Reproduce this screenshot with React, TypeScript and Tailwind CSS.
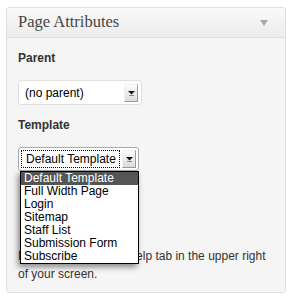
const templates = [
  "Default Template",
  "Full Width Page",
  "Login",
  "Sitemap",
  "Staff List",
  "Submission Form",
  "Subscribe",
];

function SelectArrow() {
  return (
    <div className="flex h-[18px] w-[14px] items-center justify-center border border-t-[#f0f0f0] border-l-[#f0f0f0] border-r-[#9a9a9a] border-b-[#9a9a9a] bg-gradient-to-b from-[#fbfbfb] to-[#dcdcdc]">
      <svg width="7" height="6" viewBox="0 0 7 6">
        <path d="M0 1h7L3.5 4.5z" fill="#111" />
        <path d="M1 5.5h5" stroke="#888" strokeWidth="1" />
      </svg>
    </div>
  );
}

export default function App() {
  return (
    <div className="h-[300px] w-[293px] bg-white pl-[6px] pt-[7px] font-['Liberation_Sans',Arial,sans-serif] text-[#333]">
      <div className="h-[286px] w-[280px] rounded-[3px] border border-[#dfdfdf] bg-[#f5f5f5]">
        <div className="flex h-[30px] items-center justify-between rounded-t-[3px] border-b border-[#dfdfdf] bg-gradient-to-b from-[#f9f9f9] to-[#ececec] pl-[11px] pr-[17px]">
          <h3 className="font-['Liberation_Serif',Georgia,serif] text-[16.5px] leading-none text-[#464646]">
            Page Attributes
          </h3>
          <svg width="8" height="6" viewBox="0 0 8 6">
            <path d="M0 0h8L4 6z" fill="#a8a8a8" />
          </svg>
        </div>

        <div className="px-[11px] pt-[12px]">
          <p className="text-[12px] font-bold leading-[16px]">Parent</p>
          <div className="mt-[14px] flex h-[25px] w-[124px] items-center justify-between rounded-[3px] border border-[#dfdfdf] bg-white pl-[6px] pr-[3px]">
            <span className="text-[12px] leading-none text-black">(no parent)</span>
            <SelectArrow />
          </div>

          <p className="mt-[12px] text-[12px] font-bold leading-[16px]">Template</p>
          <div className="relative mt-[14px] w-[121px]">
            <div className="flex h-[24px] items-center justify-between rounded-[3px] border border-[#a9a9a9] bg-white px-[2px]">
              <span className="flex h-[18px] flex-1 items-center whitespace-nowrap border border-dotted border-black pl-[4px] text-[12px] leading-none text-black">
                Default Template
              </span>
              <div className="ml-[2px]">
                <SelectArrow />
              </div>
            </div>
            <ul className="absolute left-[2px] top-full z-10 w-[119px] border border-black bg-white shadow-[-2px_3px_6px_rgba(0,0,0,0.45)]">
              {templates.map((t, i) => (
                <li
                  key={t}
                  className={`h-[13px] whitespace-nowrap pl-[3px] text-[12px] leading-[13px] ${
                    i === 0 ? "bg-[#555] text-white" : "text-black"
                  }`}
                >
                  {t}
                </li>
              ))}
            </ul>
          </div>

          <p className="mt-[76px] text-[12px] leading-[18px]">
            Need help? Use the Help tab in the upper right of your screen.
          </p>
        </div>
      </div>
    </div>
  );
}
